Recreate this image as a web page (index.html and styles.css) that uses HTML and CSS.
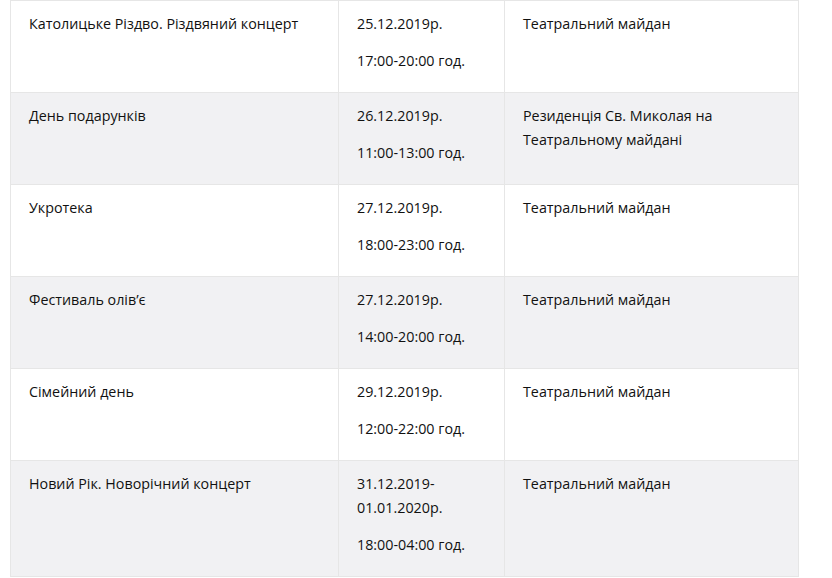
FILE: index.html
```html
<!DOCTYPE html>
<html lang="uk">
<head>
<meta charset="utf-8">
<link rel="stylesheet" href="styles.css">
</head>
<body>
<table class="events">
  <colgroup>
    <col class="c1"><col class="c2"><col class="c3">
  </colgroup>
  <tbody>
    <tr>
      <td><p>Католицьке Різдво. Різдвяний концерт</p></td>
      <td><p>25.12.2019р.</p><p>17:00-20:00 год.</p></td>
      <td><p>Театральний майдан</p></td>
    </tr>
    <tr class="alt">
      <td><p>День подарунків</p></td>
      <td><p>26.12.2019р.</p><p>11:00-13:00 год.</p></td>
      <td><p>Резиденція Св. Миколая на Театральному майдані</p></td>
    </tr>
    <tr>
      <td><p>Укротека</p></td>
      <td><p>27.12.2019р.</p><p>18:00-23:00 год.</p></td>
      <td><p>Театральний майдан</p></td>
    </tr>
    <tr class="alt">
      <td><p>Фестиваль олів’є</p></td>
      <td><p>27.12.2019р.</p><p>14:00-20:00 год.</p></td>
      <td><p>Театральний майдан</p></td>
    </tr>
    <tr>
      <td><p>Сімейний день</p></td>
      <td><p>29.12.2019р.</p><p>12:00-22:00 год.</p></td>
      <td><p>Театральний майдан</p></td>
    </tr>
    <tr class="alt">
      <td><p>Новий Рік. Новорічний концерт</p></td>
      <td><p>31.12.2019-01.01.2020р.</p><p>18:00-04:00 год.</p></td>
      <td><p>Театральний майдан</p></td>
    </tr>
  </tbody>
</table>
</body>
</html>
```
FILE: styles.css
```css
html, body {
  margin: 0;
  padding: 0;
  background: #ffffff;
}
body {
  padding-left: 10px;
  font-family: "Open Sans", "Noto Sans", sans-serif;
  font-size: 14.3px;
  line-height: 24px;
  color: #111111;
}
.events {
  border-collapse: collapse;
  table-layout: fixed;
  width: 788px;
}
.c1 { width: 328px; }
.c2 { width: 166px; }
.c3 { width: 294px; }
.events td {
  border: 1px solid #e6e6e6;
  vertical-align: top;
  padding: 11px 18px 6px;
}
.events td p {
  margin: 0 0 13px;
}
.events tr.alt td {
  background: #f1f1f3;
}
```
